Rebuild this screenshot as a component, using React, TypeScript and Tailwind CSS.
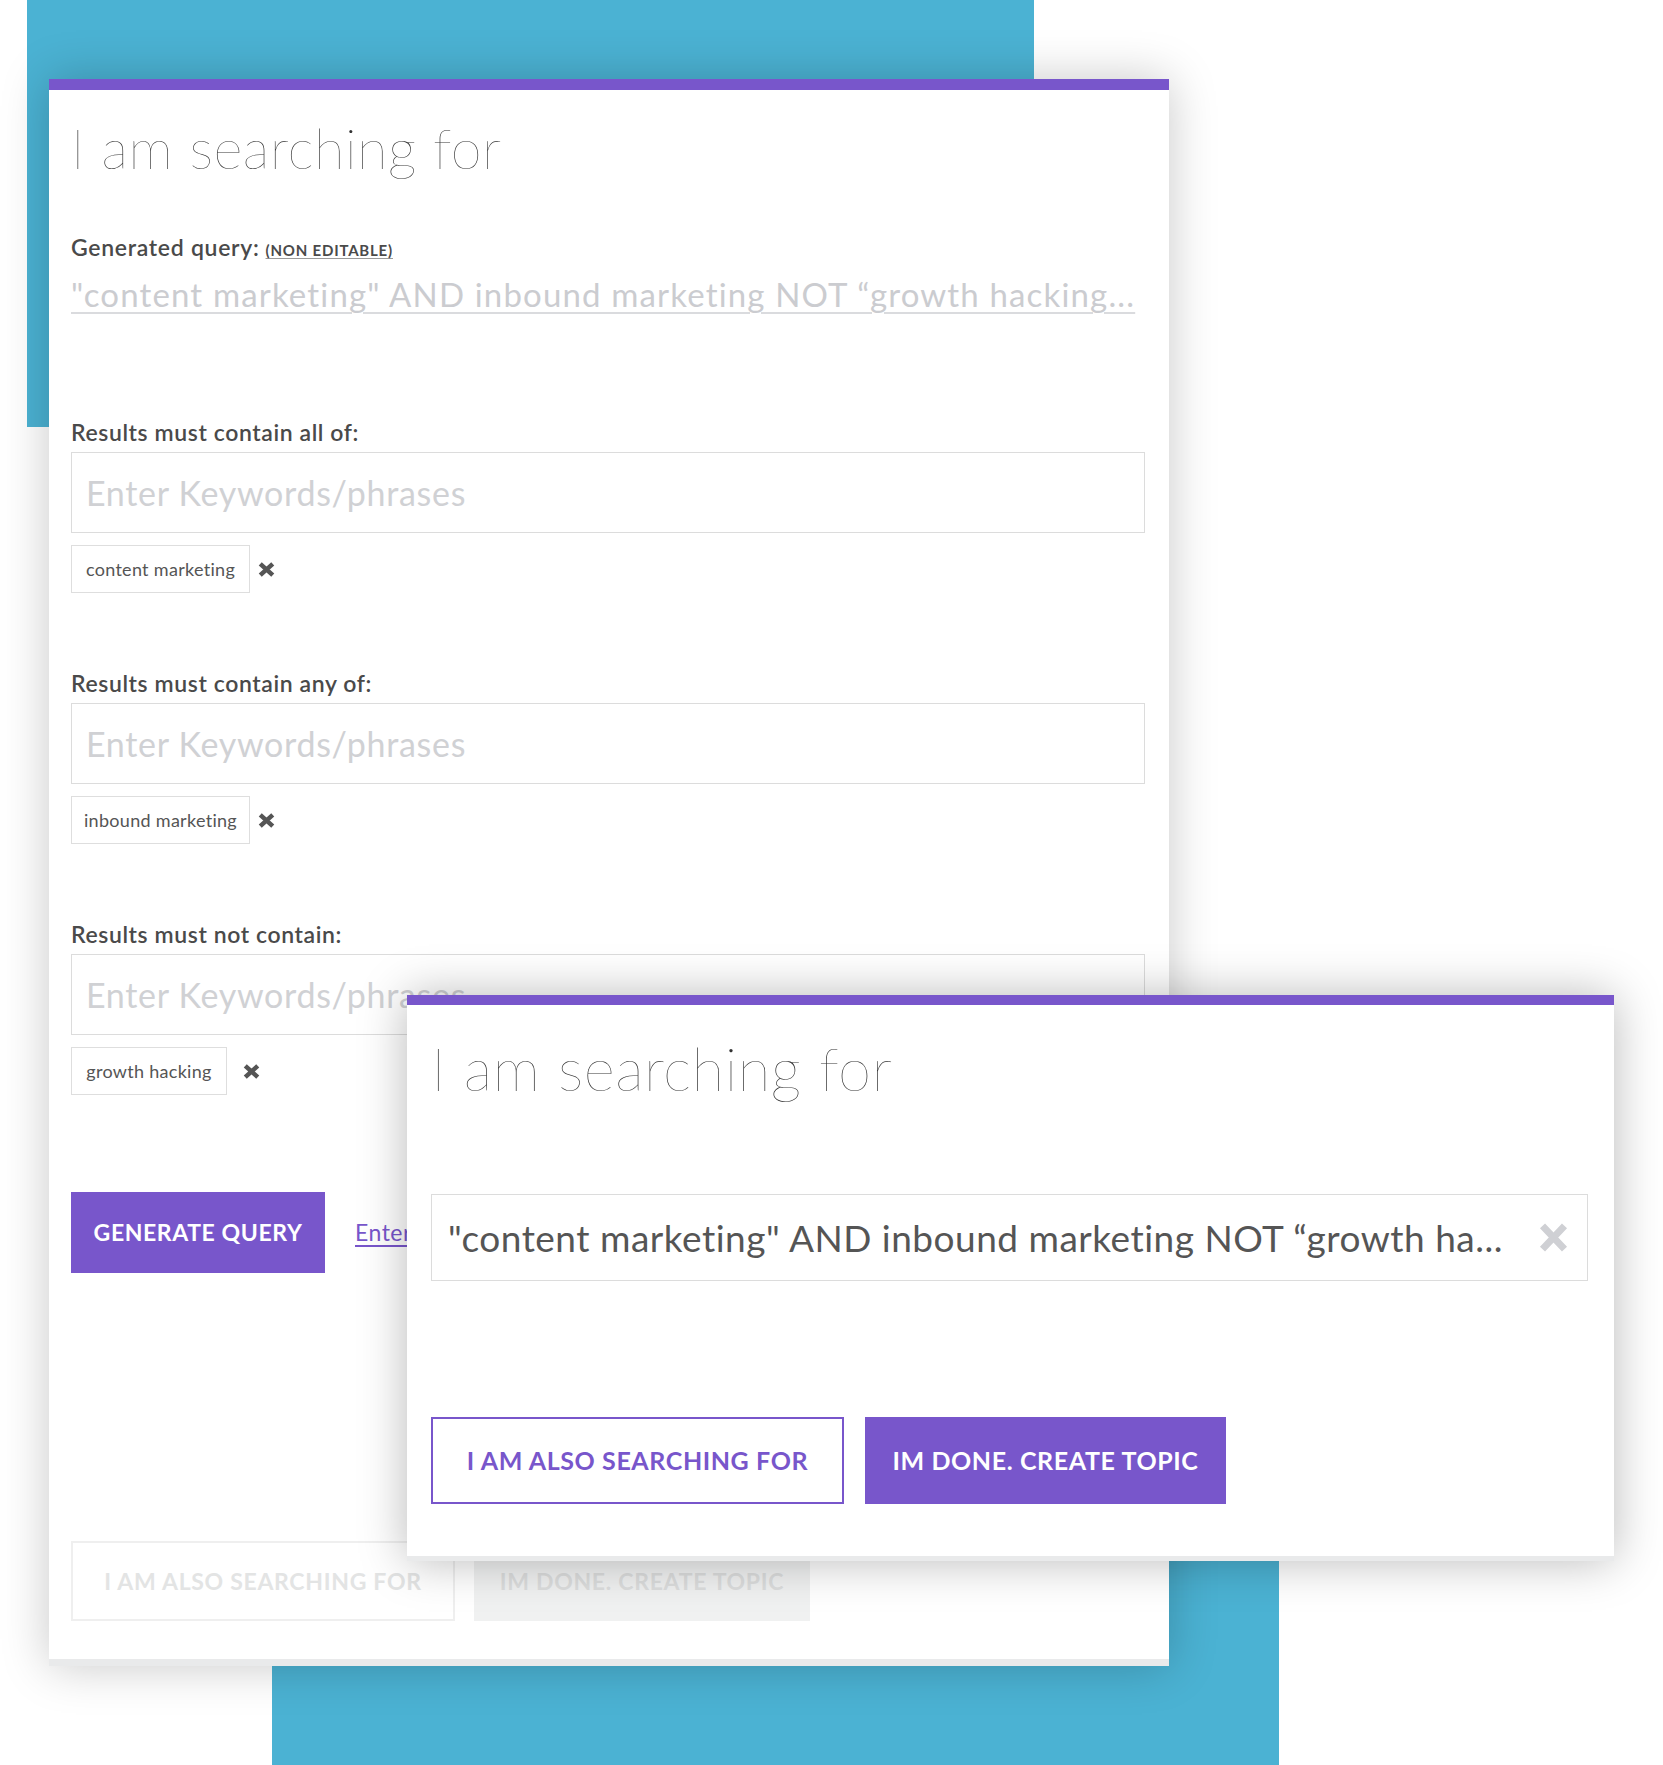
import React from "react";

const lato = "font-['Lato',sans-serif]";

function Cross({ className, w, h, sw }: { className: string; w: number; h: number; sw: number }) {
  return (
    <svg width={w} height={h} viewBox={`0 0 ${w} ${h}`} className={className}>
      <path
        d={`M${sw / 2} ${sw / 2.4} L${w - sw / 2} ${h - sw / 2.4} M${w - sw / 2} ${sw / 2.4} L${sw / 2} ${h - sw / 2.4}`}
        stroke="currentColor"
        strokeWidth={sw}
        strokeLinecap="butt"
        fill="none"
      />
    </svg>
  );
}

function KeywordField({
  label,
  tag,
  tagWidth,
  crossGap,
  first,
}: {
  label: string;
  tag: string;
  tagWidth: string;
  crossGap: string;
  first?: boolean;
}) {
  return (
    <div className={first ? "mt-[105px]" : "mt-[75px]"}>
      <p className="h-[30px] leading-[30px] text-[23px] font-semibold tracking-[0.6px] text-[#4a4a4a]">{label}</p>
      <div className="mt-[5px] flex h-[81px] items-center border border-[#dcdcdc] pl-[14px] text-[34px] tracking-[0.7px] text-[#d0d1d4]">
        Enter Keywords/phrases
      </div>
      <div className="mt-3 flex items-center">
        <div
          className={`flex h-12 items-center justify-center border border-[#dedede] text-[18px] tracking-[0.3px] text-[#555] ${tagWidth}`}
        >
          {tag}
        </div>
        <Cross className={`text-[#555] ${crossGap}`} w={17} h={15} sw={4.5} />
      </div>
    </div>
  );
}

function QueryBuilder() {
  return (
    <div
      className={`absolute left-[49px] top-[79px] h-[1587px] w-[1120px] border-b-[7px] border-[#e9eaeb] bg-white shadow-[0_0_45px_rgba(0,0,0,0.22)] ${lato}`}
    >
      <div className="h-[11px] bg-[#7856cb]" />
      <div className="pl-[22px] pr-[24px]">
        <h1 className="mt-[28px] h-[60px] leading-[60px] text-[56px] font-extralight tracking-[0.45px] text-[#333]">
          I am searching for
        </h1>

        <p className="mt-[54px] flex h-[30px] items-baseline leading-[30px] text-[23px] font-semibold tracking-[0.7px] text-[#4a4a4a]">
          Generated query:
          <span className="ml-[6px] text-[15px] font-bold tracking-[0.8px] underline decoration-[#9a9a9a] underline-offset-2">
            (NON EDITABLE)
          </span>
        </p>
        <p className="mt-[14px] h-[36px] whitespace-nowrap leading-[36px] text-[33px] tracking-[1.15px] text-[#cbccd0] underline decoration-[#dadbde] decoration-2 underline-offset-[5px]">
          "content marketing" AND inbound marketing NOT “growth hacking...
        </p>

        <KeywordField first label="Results must contain all of:" tag="content marketing" tagWidth="w-[179px]" crossGap="ml-2" />
        <KeywordField label="Results must contain any of:" tag="inbound marketing" tagWidth="w-[179px]" crossGap="ml-2" />
        <KeywordField label="Results must not contain:" tag="growth hacking" tagWidth="w-[156px]" crossGap="ml-4" />

        <div className="mt-[97px] flex items-center">
          <button className="flex h-[81px] w-[254px] items-center justify-center bg-[#7856cb] text-[23px] font-bold tracking-[0.6px] text-white">
            GENERATE QUERY
          </button>
          <a className="ml-[30px] text-[23px] tracking-[0.5px] text-[#7856cb] underline underline-offset-4">
            Enter query manually
          </a>
        </div>

        <div className="mt-[268px] flex gap-[19px]">
          <button className="flex h-[80px] w-[384px] items-center justify-center border-2 border-[#efefef] text-[23px] font-bold tracking-[0.7px] text-[#e3e4e4]">
            I AM ALSO SEARCHING FOR
          </button>
          <button className="flex h-[80px] w-[336px] items-center justify-center bg-[#f0f1f1] text-[23px] font-bold tracking-[0.7px] text-[#dcdddd]">
            IM DONE. CREATE TOPIC
          </button>
        </div>
      </div>
    </div>
  );
}

function QuerySummary() {
  return (
    <div
      className={`absolute left-[407px] top-[995px] h-[566px] w-[1207px] border-b-[5px] border-[#e9eaeb] bg-white shadow-[0_0_45px_rgba(0,0,0,0.28)] ${lato}`}
    >
      <div className="h-[10px] bg-[#7856cb]" />
      <div className="pl-[24px] pr-[26px]">
        <h1 className="mt-[28px] h-[70px] leading-[70px] text-[60px] font-extralight tracking-[0.5px] text-[#333]">
          I am searching for
        </h1>

        <div className="mt-[91px] flex h-[87px] items-center justify-between border border-[#dcdcdc] pl-[16px] pr-[19px]">
          <span className="whitespace-nowrap text-[37px] tracking-[0.5px] text-[#555]">
            "content marketing" AND inbound marketing NOT “growth ha...
          </span>
          <Cross className="text-[#cfd0d4]" w={29} h={29} sw={7} />
        </div>

        <div className="mt-[136px] flex gap-[21px]">
          <button className="flex h-[87px] w-[413px] items-center justify-center border-2 border-[#7856cb] text-[25px] font-bold tracking-[0.6px] text-[#7856cb]">
            I AM ALSO SEARCHING FOR
          </button>
          <button className="flex h-[87px] w-[361px] items-center justify-center bg-[#7856cb] text-[25px] font-bold tracking-[0.6px] text-white">
            IM DONE. CREATE TOPIC
          </button>
        </div>
      </div>
    </div>
  );
}

export default function App() {
  return (
    <div className="relative h-[1765px] w-[1663px] overflow-hidden bg-white">
      <div className="absolute left-[27px] top-0 h-[427px] w-[1007px] bg-[#4bb2d3]" />
      <div className="absolute left-[272px] top-[1540px] h-[225px] w-[1007px] bg-[#4bb2d3]" />
      <QueryBuilder />
      <QuerySummary />
    </div>
  );
}
